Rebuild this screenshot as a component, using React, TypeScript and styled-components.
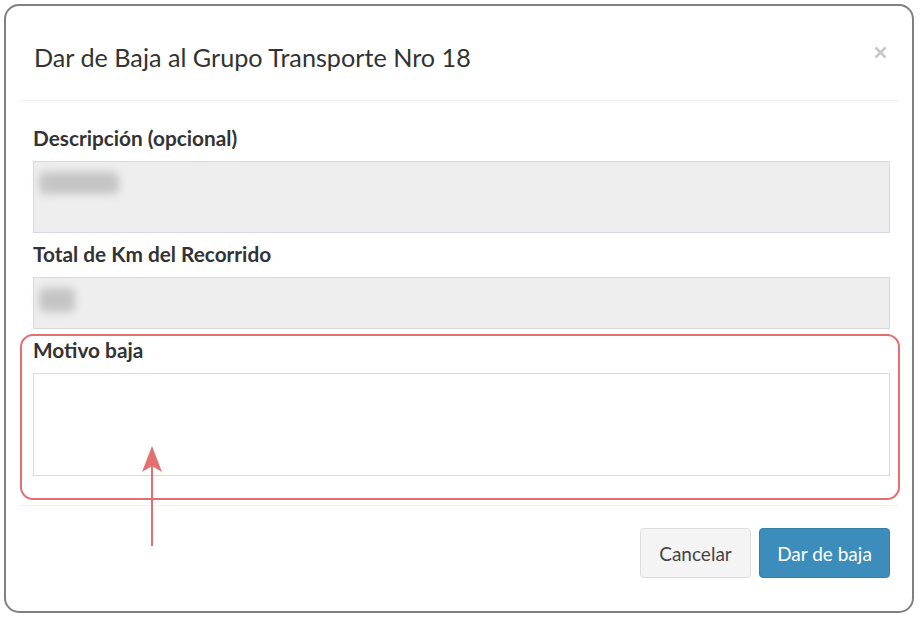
import React from "react";
import styled, { createGlobalStyle } from "styled-components";

const GlobalStyle = createGlobalStyle`
  html, body { margin: 0; padding: 0; background: #ffffff; }
  body { font-family: "Lato", "Liberation Sans", sans-serif; color: #333; }
  * { box-sizing: border-box; }
`;

const Frame = styled.div`
  position: relative;
  margin: 4px 0 0 4px;
  width: 910px;
  height: 609px;
  border: 2px solid #808080;
  border-radius: 15px;
  background: #fff;
  padding: 0 13px 0 14px;
  display: flex;
  flex-direction: column;
`;

const Header = styled.div`
  display: flex;
  align-items: flex-start;
  justify-content: space-between;
  height: 95px;
  padding: 34px 11px 0 14px;
  border-bottom: 1px solid #f0f0f0;
`;

const Title = styled.h4`
  margin: 0;
  font-size: 25.2px;
  line-height: 34px;
  font-weight: 400;
  color: #333;
`;

const Close = styled.button`
  border: 0;
  background: transparent;
  padding: 0;
  margin-top: 4px;
  width: 16px;
  height: 16px;
  display: flex;
  align-items: center;
  justify-content: center;
  cursor: pointer;
`;

const Body = styled.div`
  padding: 25px 9px 29px 13px;
  border-bottom: 1px solid #f0f0f0;
`;

const FormGroup = styled.div<{ $last?: boolean }>`
  margin-bottom: ${(p) => (p.$last ? "0" : "9px")};
`;

const Label = styled.label`
  display: block;
  font-size: 20.8px;
  line-height: 23px;
  font-weight: 700;
  color: #333;
  margin-bottom: 12px;
`;

const Field = styled.div<{ $h: number; $disabled?: boolean }>`
  height: ${(p) => p.$h}px;
  border: 1px solid #d6d9e0;
  background: ${(p) => (p.$disabled ? "#eeeeee" : "#ffffff")};
  padding: ${(p) => (p.$disabled ? "8px 5px" : "0")};
`;

const Blur = styled.div<{ $w: number; $h: number }>`
  width: ${(p) => p.$w}px;
  height: ${(p) => p.$h}px;
  background: #c4c4c4;
  border-radius: 6px;
  filter: blur(4px);
  margin-top: 2px;
`;

const Footer = styled.div`
  display: flex;
  justify-content: flex-end;
  gap: 8px;
  padding: 22px 9px 0 0;
`;

const Button = styled.button<{ $primary?: boolean; $w: number }>`
  width: ${(p) => p.$w}px;
  height: 50px;
  border-radius: 4px;
  font-family: inherit;
  font-size: 19px;
  cursor: pointer;
  border: 1px solid ${(p) => (p.$primary ? "#367fa9" : "#dddddd")};
  background: ${(p) => (p.$primary ? "#3c8dbc" : "#f4f4f4")};
  color: ${(p) => (p.$primary ? "#ffffff" : "#444444")};
`;

const Highlight = styled.div`
  position: absolute;
  left: 14px;
  top: 328px;
  width: 880px;
  height: 166px;
  border: 2px solid #e36f70;
  border-radius: 13px;
  pointer-events: none;
`;

const Arrow = styled.svg`
  position: absolute;
  left: 127px;
  top: 438px;
  pointer-events: none;
`;

export default function App() {
  return (
    <>
      <GlobalStyle />
      <Frame>
        <Header>
          <Title>Dar de Baja al Grupo Transporte Nro 18</Title>
          <Close aria-label="Cerrar">
            <svg width="13" height="13" viewBox="0 0 13 13">
              <path d="M1.5 1.5 L11.5 11.5 M11.5 1.5 L1.5 11.5" stroke="#c8c8c8" strokeWidth="2.6" strokeLinecap="butt" />
            </svg>
          </Close>
        </Header>
        <Body>
          <FormGroup>
            <Label>Descripción (opcional)</Label>
            <Field $h={72} $disabled>
              <Blur $w={80} $h={22} />
            </Field>
          </FormGroup>
          <FormGroup>
            <Label>Total de Km del Recorrido</Label>
            <Field $h={52} $disabled>
              <Blur $w={36} $h={24} />
            </Field>
          </FormGroup>
          <FormGroup $last>
            <Label>Motivo baja</Label>
            <Field $h={103} />
          </FormGroup>
        </Body>
        <Footer>
          <Button $w={111}>Cancelar</Button>
          <Button $w={131} $primary>Dar de baja</Button>
        </Footer>
        <Highlight />
        <Arrow width="40" height="110" viewBox="0 0 40 110">
          <line x1="19" y1="22" x2="19" y2="102" stroke="#e36f70" strokeWidth="2" />
          <path d="M19 2 L29 28 L19 22 L9 28 Z" fill="#e36f70" />
        </Arrow>
      </Frame>
    </>
  );
}
